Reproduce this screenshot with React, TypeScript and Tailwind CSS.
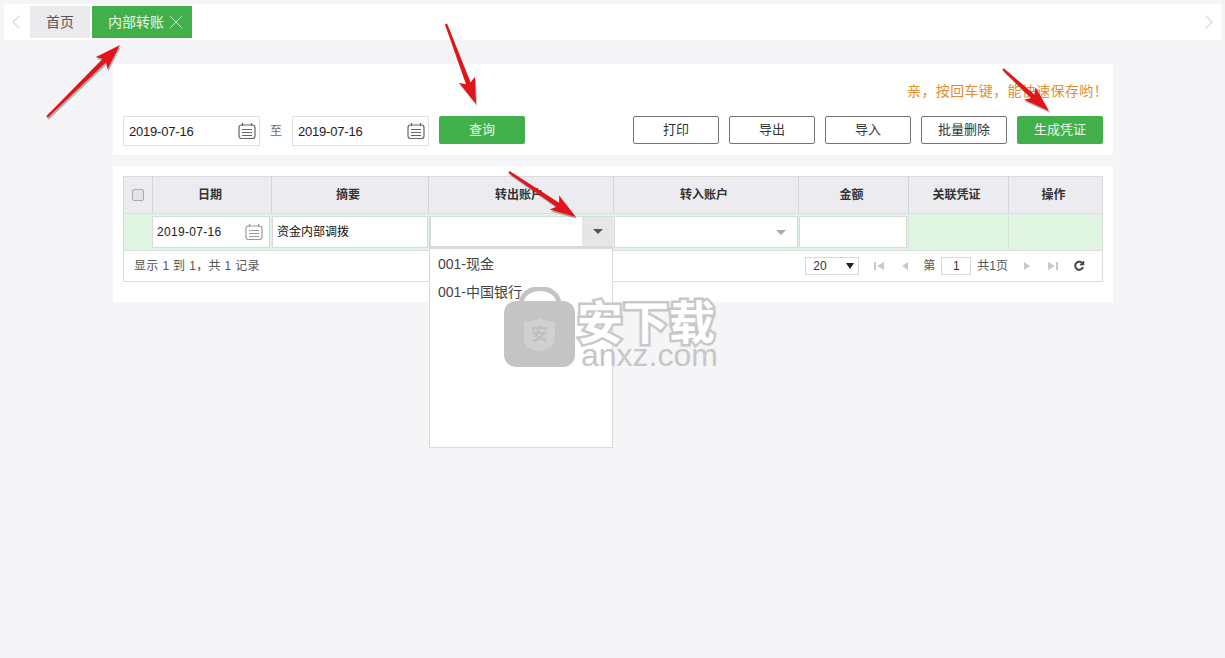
import { ChevronLeft, ChevronRight, X } from "lucide-react";

const cjk = "font-['Liberation_Sans','Noto_Sans_CJK_SC',sans-serif]";

function CalendarIcon({ muted = false }: { muted?: boolean }) {
  const color = muted ? "#9a9a9a" : "#666666";
  return (
    <svg width="18" height="18" viewBox="0 0 18 18" fill="none" stroke={color} strokeWidth="1.2">
      <rect x="1" y="3" width="16" height="13.5" rx="2.5" />
      <path d="M4.5 1v3M13.5 1v3M4 7.5h10M4 10.5h10M4 13.5h10" />
    </svg>
  );
}

function DateField({ width, className = "" }: { width: string; className?: string }) {
  return (
    <div className={`flex h-[30px] items-center justify-between border border-[#dfe1e6] bg-white pl-[5px] pr-[2px] text-[13px] tracking-[-0.2px] text-[#222] ${width} ${className}`}>
      <span className="pt-[1px]">2019-07-16</span>
      <span className="mr-[1px]"><CalendarIcon /></span>
    </div>
  );
}

function OutlineButton({ label }: { label: string }) {
  return (
    <button className="h-[28px] w-[86px] rounded-[2px] border border-[#777] bg-white text-[13px] text-[#333]">
      {label}
    </button>
  );
}

function GreenButton({ label }: { label: string }) {
  return (
    <button className="h-[28px] w-[86px] rounded-[2px] bg-[#41b04a] text-[13px] text-[#eef8ef]">
      {label}
    </button>
  );
}

function Head({ label, last = false }: { label: string; last?: boolean }) {
  return (
    <div className={`flex items-center justify-center pr-[4px] text-[12px] font-bold text-[#333] ${last ? "" : "border-r border-[#d6d6d8]"}`}>
      {label}
    </div>
  );
}

function PagerGlyph({ d }: { d: string }) {
  return (
    <svg width="12" height="12" viewBox="0 0 12 12" fill="#c9c9c9">
      <path d={d} />
    </svg>
  );
}

function Arrow({ tail, tip }: { tail: [number, number]; tip: [number, number] }) {
  const dx = tip[0] - tail[0];
  const dy = tip[1] - tail[1];
  const len = Math.hypot(dx, dy);
  const ux = dx / len;
  const uy = dy / len;
  const nx = -uy;
  const ny = ux;
  const at = (along: number, side: number) =>
    `${tail[0] + ux * along + nx * side},${tail[1] + uy * along + ny * side}`;
  const points = [
    at(0, 1.1),
    at(len - 22, 2.4),
    at(len - 26, 8.5),
    at(len, 0),
    at(len - 26, -8.5),
    at(len - 22, -2.4),
    at(0, -1.1)
  ].join(" ");
  return (
    <>
      <polygon points={points} fill="#000" opacity="0.28" transform="translate(1 2)" />
      <polygon points={points} fill="#e2141a" />
    </>
  );
}

function Watermark() {
  return (
    <div className="pointer-events-none absolute left-[504px] top-[287px] z-[15] h-[84px] w-[216px]">
      <svg className="absolute left-0 top-0" width="72" height="81" viewBox="0 0 72 81">
        <path d="M17 18C17 -4 55 -4 55 18" fill="none" stroke="#c4c4c4" strokeWidth="5" />
        <rect x="0" y="14" width="71" height="66" rx="12" fill="#c4c4c4" />
        <path d="M20 35q8 0 15.500-4q8 4 15.500 4v17q0 9-15.500 13q-15.500-4-15.500-13z" fill="#d0d0d0" />
      </svg>
      <span className="absolute left-[27px] top-[36px] text-[17px] font-bold leading-[20px] text-[#c0c0c0] font-['Noto_Sans_CJK_SC',sans-serif]">安</span>
      <span className="absolute left-[73px] top-[4px] whitespace-nowrap text-[46px] font-bold leading-[56px] text-white [-webkit-text-stroke:5px_#c8c8c8] [paint-order:stroke_fill] font-['Noto_Sans_CJK_SC',sans-serif]">安下载</span>
      <span className="absolute left-[77px] top-[50px] text-[32px] leading-[36px] text-[#c6c6c6] font-['Liberation_Sans',sans-serif]">anxz.com</span>
    </div>
  );
}

export default function App() {
  return (
    <div className={`relative h-[658px] w-[1225px] overflow-hidden bg-[#f5f5f8] pt-1 ${cjk}`}>
      <div className="mx-1 flex h-9 items-center justify-between bg-white">
        <div className="flex items-center">
          <ChevronLeft className="mr-[2px] h-6 w-6 text-[#dcdcdc]" strokeWidth={1.5} />
          <div className="mr-[2px] flex h-8 w-[60px] items-center justify-center bg-[#ebebed] text-[14px] text-[#555]">首页</div>
          <div className="flex h-8 w-[100px] items-center bg-[#41b04a] pl-4 text-[14px] text-[#eaf6eb]">
            内部转账
            <X className="h-6 w-6 shrink-0 text-[#cfebd1]" strokeWidth={1} />
          </div>
        </div>
        <ChevronRight className="h-6 w-6 text-[#dcdcdc]" strokeWidth={1.5} />
      </div>

      <section className="ml-[113px] mt-6 h-[91px] w-[1000px] bg-white px-[10px]">
        <p className="-mr-[5px] pt-[17px] text-right text-[14px] leading-5 tracking-[0.35px] text-[#e08f30]">亲，按回车键，能快速保存哟！</p>
        <div className="mt-[15px] flex items-start justify-between">
          <div className="flex items-start">
            <DateField width="w-[137px]" />
            <span className="flex h-[30px] w-[32px] items-center justify-center text-[12px] text-[#666]">至</span>
            <DateField width="w-[137px]" />
            <div className="ml-[10px]"><GreenButton label="查询" /></div>
          </div>
          <div className="flex gap-[10px]">
            <OutlineButton label="打印" />
            <OutlineButton label="导出" />
            <OutlineButton label="导入" />
            <OutlineButton label="批量删除" />
            <GreenButton label="生成凭证" />
          </div>
        </div>
      </section>

      <section className="ml-[113px] mt-[11px] h-[136px] w-[1000px] bg-white px-[10px] pt-[10px]">
        <div className="w-[980px] border border-[#dcdcde]">
          <div className="grid h-[36px] grid-cols-[29px_119px_157px_185px_185px_110px_100px_1fr] bg-[#ecebef]">
            <div className="flex items-center justify-center border-r border-[#d6d6d8]">
              <span className="h-3 w-3 rounded-[2px] border border-[#aaa] bg-[#e4e4e6]" />
            </div>
            <Head label="日期" />
            <Head label="摘要" />
            <Head label="转出账户" />
            <Head label="转入账户" />
            <Head label="金额" />
            <Head label="关联凭证" />
            <Head label="操作" last />
          </div>
          <div className="grid h-[37px] grid-cols-[29px_119px_157px_185px_185px_110px_100px_1fr] border-t border-[#cfe8d1] bg-[#e0f5e1]">
            <div />
            <div className="flex items-center py-[2px] pr-[1px]">
              <div className="-ml-[1px] flex h-full w-full items-center justify-between border border-[#d9d9d9] bg-white pl-1 pr-[6px] text-[12px] tracking-[0.3px] text-[#222]">
                <span>2019-07-16</span>
                <CalendarIcon muted />
              </div>
            </div>
            <div className="py-[2px] pr-[1px]">
              <div className="flex h-full items-center border border-[#d9d9d9] bg-white pl-1 text-[12px] text-[#111]">资金内部调拨</div>
            </div>
            <div className="relative py-[2px] pr-[1px]">
              <div className="flex h-full items-center justify-end border-y-2 border-l-2 border-t border-[#d9d9d9] bg-white">
                <div className="flex h-full w-[31px] items-center justify-center bg-[#e6e6e6]">
                  <span className="h-0 w-0 border-x-[5px] border-t-[5px] border-x-transparent border-t-[#555]" />
                </div>
              </div>
              <div className="absolute left-0 top-[34px] z-10 h-[200px] w-[184px] border border-[#d9d9d9] bg-white pt-[1px] text-[14px] text-[#444]">
                <div className="flex h-7 items-center pl-2">001-现金</div>
                <div className="flex h-7 items-center pl-2">001-中国银行</div>
              </div>
            </div>
            <div className="py-[2px] pr-[1px]">
              <div className="flex h-full items-center justify-end border border-[#d9d9d9] bg-white pr-[11px]">
                <span className="h-0 w-0 border-x-[5px] border-t-[5px] border-x-transparent border-t-[#aaa]" />
              </div>
            </div>
            <div className="border-r border-[#d6e6d6] py-[2px] pr-[1px]">
              <div className="h-full border border-[#d9d9d9] bg-white" />
            </div>
            <div className="border-r border-[#d6e6d6]" />
            <div />
          </div>
          <div className="flex h-[31px] items-center justify-between border-t border-[#dcdcde] bg-white pl-[10px] pr-[17px] text-[12px] text-[#555]">
            <span className="tracking-[0.35px]">显示 1 到 1，共 1 记录</span>
            <div className="flex items-center">
              <div className="flex h-[18px] w-[54px] items-center justify-between border border-[#d9d9d9] pl-[7px] pr-[4px] text-[12px] text-[#333]">
                <span>20</span>
                <span className="h-0 w-0 border-x-[4px] border-t-[6px] border-x-transparent border-t-[#222]" />
              </div>
              <div className="ml-[14px]"><PagerGlyph d="M1 2h2v8H1zM11 2v8L4 6z" /></div>
              <div className="ml-[14px]"><PagerGlyph d="M9 2v8L3 6z" /></div>
              <span className="ml-[12px]">第</span>
              <span className="mx-[6px] flex h-[18px] w-[30px] items-center justify-center border border-[#d9d9d9] text-[#333]">1</span>
              <span>共1页</span>
              <div className="ml-[13px]"><PagerGlyph d="M3 2v8l6-4z" /></div>
              <div className="ml-[14px]"><PagerGlyph d="M1 2v8l7-4zM9 2h2v8H9z" /></div>
              <svg className="ml-[14px]" width="12" height="12" viewBox="0 0 12 12" fill="none" stroke="#444" strokeWidth="2">
                <path d="M9.800 4A4 4 0 1 0 10 7" />
                <path d="M10.500 1v3.500H7" strokeWidth="1.500" />
              </svg>
            </div>
          </div>
        </div>
      </section>

      <Watermark />

      <svg className="pointer-events-none absolute left-0 top-0 z-20" width="1225" height="658">
        <Arrow tail={[47, 117]} tip={[120, 45]} />
        <Arrow tail={[446, 24]} tip={[476, 104]} />
        <Arrow tail={[1003, 69]} tip={[1049, 111]} />
        <Arrow tail={[509, 172]} tip={[576, 217]} />
      </svg>
    </div>
  );
}
